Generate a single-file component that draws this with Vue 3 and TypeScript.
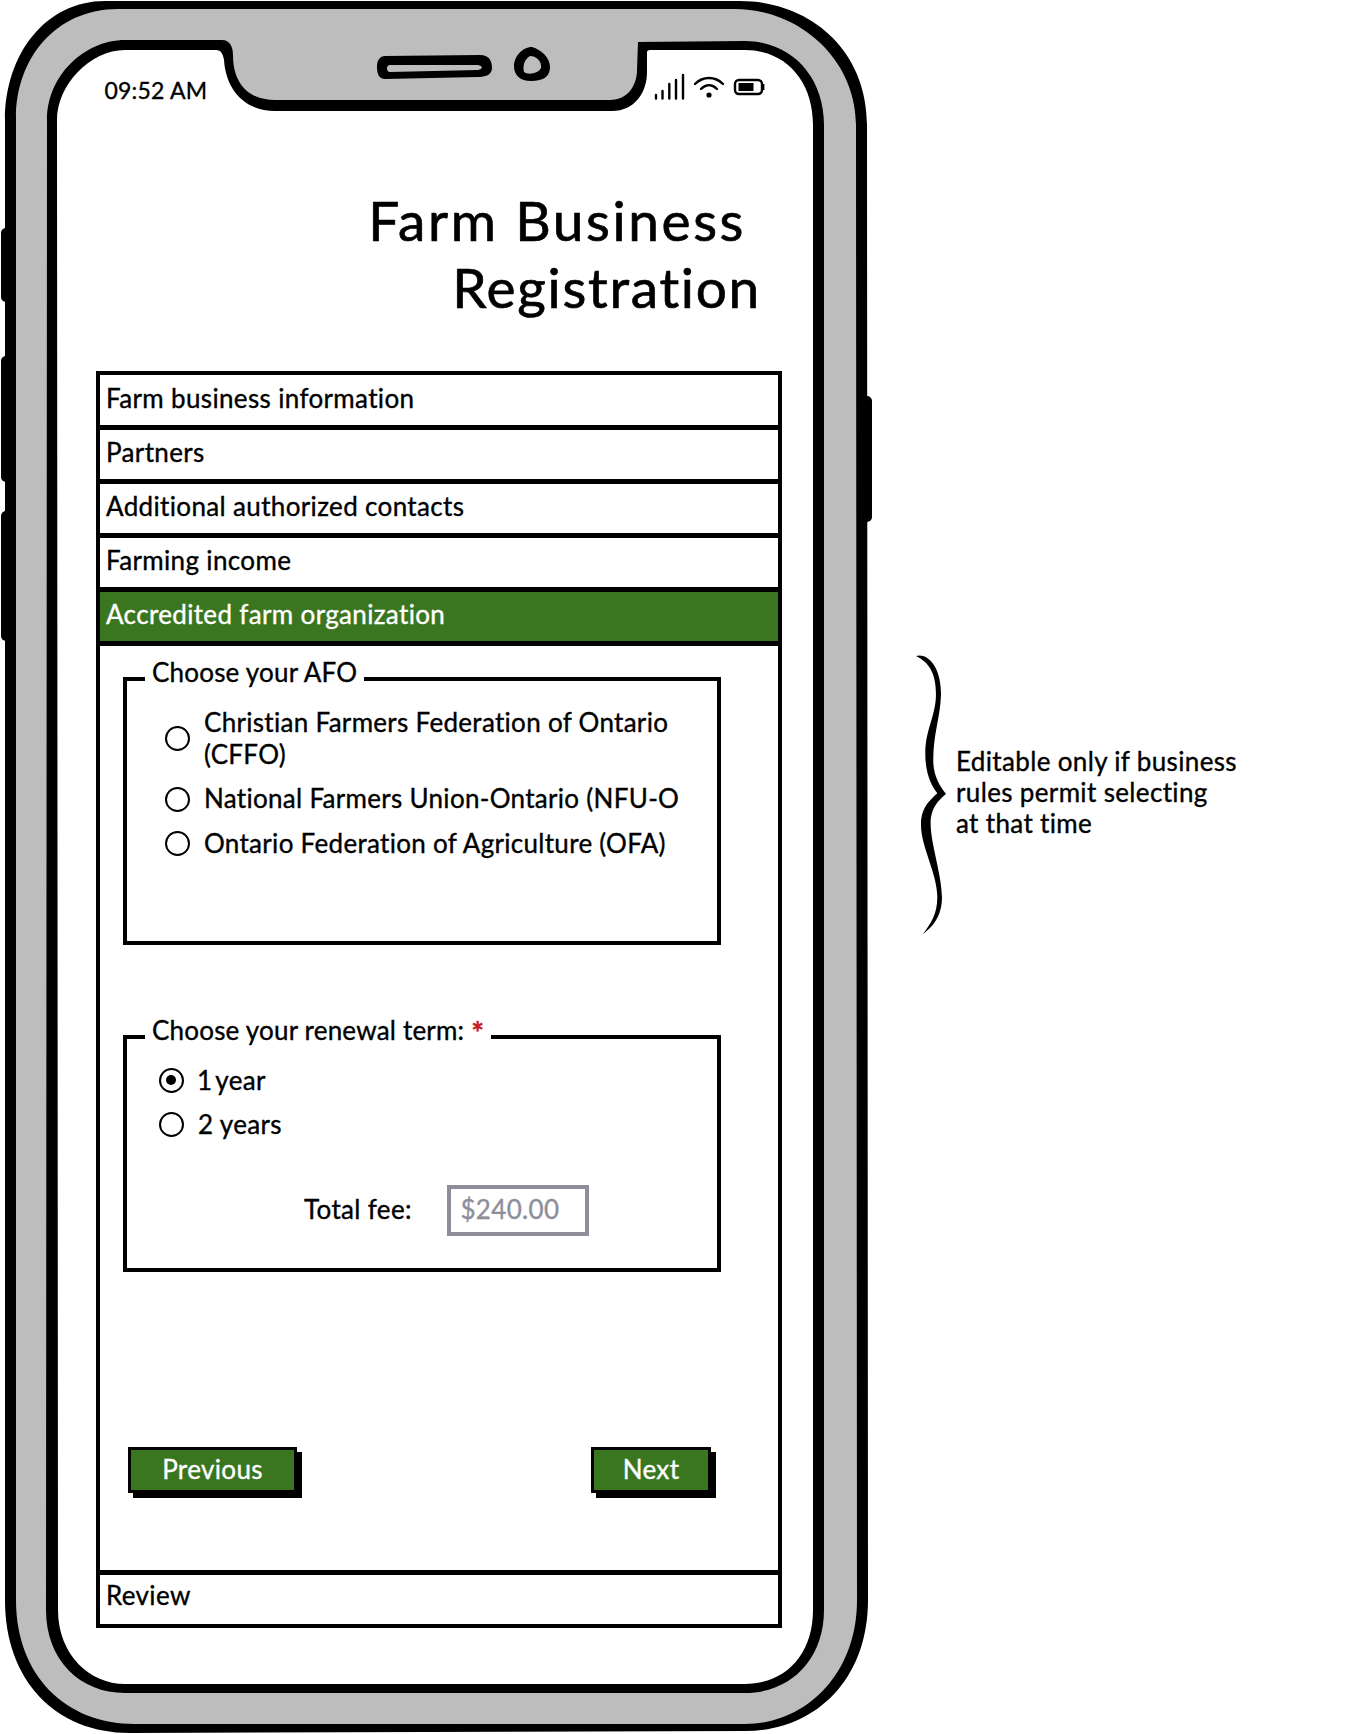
<script setup lang="ts">
const steps: string[] = ['Farm business information', 'Partners', 'Additional authorized contacts', 'Farming income']
const afos: string[] = ['National Farmers Union-Ontario (NFU-O', 'Ontario Federation of Agriculture (OFA)']
</script>

<template>
  <div class="page">
    <div class="phone">
      <svg class="frame" width="880" height="1734" viewBox="0 0 880 1734">
        <rect x="1" y="228" width="12" height="74" rx="5" fill="#000" />
        <rect x="1" y="356" width="12" height="126" rx="5" fill="#000" />
        <rect x="1" y="511" width="12" height="130" rx="5" fill="#000" />
        <rect x="860" y="396" width="12" height="126" rx="5" fill="#000" />
        <path fill="#000" d="M105,1 L740,1 C810,1 867,50 867,125 L868,1600 C868,1680 815,1731 745,1731 L130,1733 C55,1733 5,1680 5,1600 L5,120 C5,55 45,1 105,1 Z" />
        <path fill="#bdbdbd" d="M118,9 L735,9 C800,9 856,60 856,125 L857,1600 C857,1675 805,1724 745,1724 L135,1724 C65,1724 16,1675 16,1600 L16,118 C16,58 56,9 118,9 Z" />
        <path fill="#000" d="M125,40 L222,40 C230,40 233,47 233,55 C233,85 250,100 275,100 L610,100 C628,100 637,85 637,70 L638,42 L745,41 C790,41 824,75 824,125 L824,1610 C824,1660 790,1693 745,1693 L125,1693 C80,1693 46,1660 46,1610 L47,120 C47,75 85,40 125,40 Z" />
        <path fill="#fff" d="M125,50 L216,50 C221,50 223,54 224,60 C226,90 245,111 275,111 L612,111 C635,111 647,92 647,72 L647,52 C647,51 648,50 650,50 L745,50 C785,50 813,80 813,125 L813,1610 C813,1655 785,1684 745,1684 L125,1684 C90,1684 58,1655 58,1610 L57,120 C57,85 90,50 125,50 Z" />
        <path fill="#000" fill-rule="evenodd" d="M385,56 L480,55 C490,55 492,62 492,68 C492,75 485,77 478,77 L385,79 C379,79 377,74 377,67 C377,60 380,56 385,56 Z M390,65 L478,65 C483,66 483,69 478,70 L390,72 C386,72 386,65 390,65 Z" />
        <path fill="#000" fill-rule="evenodd" d="M532,47 C542,50 550,58 550,67 C550,76 544,81 531,81 C520,81 514,75 514,66 C514,57 522,47 532,47 Z M530,56 C523,60 523,68 524,72 C528,75 538,74 541,68 C542,62 537,56 530,56 Z" />
      </svg>

      <div class="status">
        <span class="time">09:52 AM</span>
        <svg class="status-icons" width="112" height="28" viewBox="654 73 112 28">
          <g stroke="#000" stroke-width="2.4" fill="none" stroke-linecap="round">
            <path d="M656,95 V98.5 M662.5,91 V98.5 M669.3,84 V98.5 M676,80 V98.5 M683,75 V98.5" />
            <path d="M695,84 C703,76 715,76 723,84" />
            <path d="M701,89 C706,84 712,84 717,89" />
            <rect x="735" y="80" width="27" height="14" rx="4" />
          </g>
          <circle cx="709" cy="95" r="2.6" fill="#000" />
          <rect x="738.5" y="83" width="15" height="8" fill="#000" />
          <rect x="762" y="84" width="2.4" height="6" fill="#000" />
        </svg>
      </div>

      <h1 class="title">
        <span class="title-line title-first">Farm Business</span>
        <span class="title-line title-second">Registration</span>
      </h1>

      <div class="accordion">
        <div v-for="(step, i) in steps" :key="step" class="row" :class="{ first: i === 0 }">{{ step }}</div>
        <div class="row active">Accredited farm organization</div>

        <div class="panel">
          <div class="group group-afo">
            <div class="legend">Choose your AFO</div>
            <div class="option option-afo">
              <span class="radio"></span>
              <span>Christian Farmers Federation of Ontario<br />(CFFO)</span>
            </div>
            <div v-for="afo in afos" :key="afo" class="option option-afo">
              <span class="radio"></span>
              <span>{{ afo }}</span>
            </div>
          </div>

          <div class="group group-term">
            <div class="legend">Choose your renewal term: <span class="req">*</span></div>
            <div class="option">
              <span class="radio checked"></span>
              <span class="tight">1 year</span>
            </div>
            <div class="option">
              <span class="radio"></span>
              <span>2 years</span>
            </div>
            <div class="fee">
              <span class="fee-label">Total fee:</span>
              <div class="fee-input">$240.00</div>
            </div>
          </div>

          <div class="actions">
            <button class="btn btn-prev" type="button">Previous</button>
            <button class="btn btn-next" type="button">Next</button>
          </div>
        </div>

        <div class="row last">Review</div>
      </div>
    </div>

    <div class="note">
      <svg class="brace" width="38.3" height="284" viewBox="150 70 115 845" preserveAspectRatio="none">
        <path fill="#000" d="M168,82 C200,72 245,110 243,200 C240,270 218,320 220,400 C222,440 240,470 258,492 C240,510 212,530 212,580 C212,640 245,730 246,800 C246,860 215,890 188,910 C212,880 232,850 232,800 C232,730 183,650 183,585 C183,535 205,515 232,490 C215,470 195,430 196,370 C196,300 228,260 228,195 C228,130 205,100 168,82 Z" />
      </svg>
      <p class="note-text">Editable only if business<br />rules permit selecting<br />at that time</p>
    </div>
  </div>
</template>

<style scoped>
.page {
  width: 1356px;
  height: 1734px;
  display: flex;
  overflow: hidden;
  background: #fff;
  color: #000;
  font-family: Lato, "Open Sans", sans-serif;
  font-size: 26px;
  letter-spacing: 0.35px;
  font-variant-ligatures: none;
  -webkit-text-stroke: 0.35px currentColor;
}
.phone {
  position: relative;
  width: 880px;
  height: 1734px;
  flex-shrink: 0;
  display: flex;
  flex-direction: column;
}
.frame {
  position: absolute;
  left: 0;
  top: 0;
}
.status {
  position: relative;
  margin: 73px 0 0 104.5px;
  width: 661.5px;
  height: 28px;
  display: flex;
  justify-content: space-between;
  align-items: center;
}
.time {
  padding-top: 5px;
  font-size: 23px;
  letter-spacing: 0.2px;
}
.status-icons {
  display: block;
}
.title {
  position: relative;
  margin: 86px 0 0;
  width: 761px;
  font-size: 55px;
  font-weight: 400;
  line-height: 66.7px;
  text-align: right;
  -webkit-text-stroke: 0.7px currentColor;
}
.title-line {
  display: block;
}
.title-first {
  padding-right: 15px;
  letter-spacing: 2.6px;
}
.title-second {
  letter-spacing: 1.7px;
}
.accordion {
  position: relative;
  margin: 51px 0 0 96px;
  width: 686px;
}
.row {
  height: 54px;
  padding: 0 0 5px 6px;
  display: flex;
  align-items: center;
  box-sizing: border-box;
  border: solid #000;
  border-width: 0 4px 5px;
  background: #fff;
}
.row.first {
  height: 58.5px;
  border-top-width: 4.5px;
}
.row.active {
  height: 54px;
  background: #3a761f;
  color: #fff;
}
.row.last {
  height: 58px;
  padding-bottom: 8px;
  border-top-width: 5px;
  border-bottom-width: 4px;
}
.panel {
  height: 924px;
  box-sizing: border-box;
  padding: 31px 0 0 23px;
  border: solid #000;
  border-width: 0 4px;
  display: flex;
  flex-direction: column;
}
.group {
  position: relative;
  box-sizing: border-box;
  border: 4.5px solid #000;
  padding: 26px 0 0 31.5px;
  display: flex;
  flex-direction: column;
  gap: 13px;
}
.group-afo {
  width: 598px;
  height: 268.5px;
  padding-top: 26.5px;
  padding-left: 37.5px;
}
.group-afo .option {
  line-height: 31.5px;
  letter-spacing: 0.3px;
}
.group-term {
  margin-top: 89.5px;
  width: 598px;
  height: 237px;
}
.legend {
  position: absolute;
  left: 18px;
  top: -24px;
  padding: 0 7px;
  background: #fff;
  line-height: 31px;
  letter-spacing: 0.2px;
}
.req {
  color: #c8161d;
  font-weight: 700;
  font-size: 30px;
  line-height: 20px;
  vertical-align: -4px;
}
.option {
  display: flex;
  align-items: center;
  gap: 14.5px;
  line-height: 31px;
}
.tight {
  word-spacing: -3.5px;
  margin-left: -1px;
}
.radio {
  box-sizing: border-box;
  width: 25px;
  height: 25px;
  flex-shrink: 0;
  border: 2.5px solid #000;
  border-radius: 50%;
  display: flex;
  align-items: center;
  justify-content: center;
}
.radio.checked::after {
  content: "";
  width: 10px;
  height: 10px;
  border-radius: 50%;
  background: #000;
}
.fee {
  margin: 32.5px 0 0 145.5px;
  display: flex;
  align-items: center;
  gap: 35.5px;
  line-height: 28px;
}
.fee-label {
  padding-bottom: 4px;
}
.fee-input {
  box-sizing: border-box;
  width: 142px;
  height: 51px;
  padding: 0 0 3px 9px;
  display: flex;
  align-items: center;
  border: 4px solid #8e8e9b;
  color: #8e8e9b;
}
.actions {
  margin-top: 175.5px;
  padding: 0 67px 0 5px;
  display: flex;
  justify-content: space-between;
}
.btn {
  box-sizing: border-box;
  height: 46px;
  padding: 0 0 3px;
  border: 3.5px solid #000;
  box-shadow: 5px 5px 0 #000;
  background: #3a761f;
  color: #fff;
  font: inherit;
  letter-spacing: inherit;
}
.btn-prev {
  width: 169px;
}
.btn-next {
  width: 120px;
}
.note {
  margin: 652px 0 0 30px;
  display: flex;
  align-items: flex-start;
  gap: 7.7px;
}
.brace {
  display: block;
  flex-shrink: 0;
}
.note-text {
  margin: 94px 0 0;
  line-height: 31px;
  white-space: nowrap;
}
</style>
